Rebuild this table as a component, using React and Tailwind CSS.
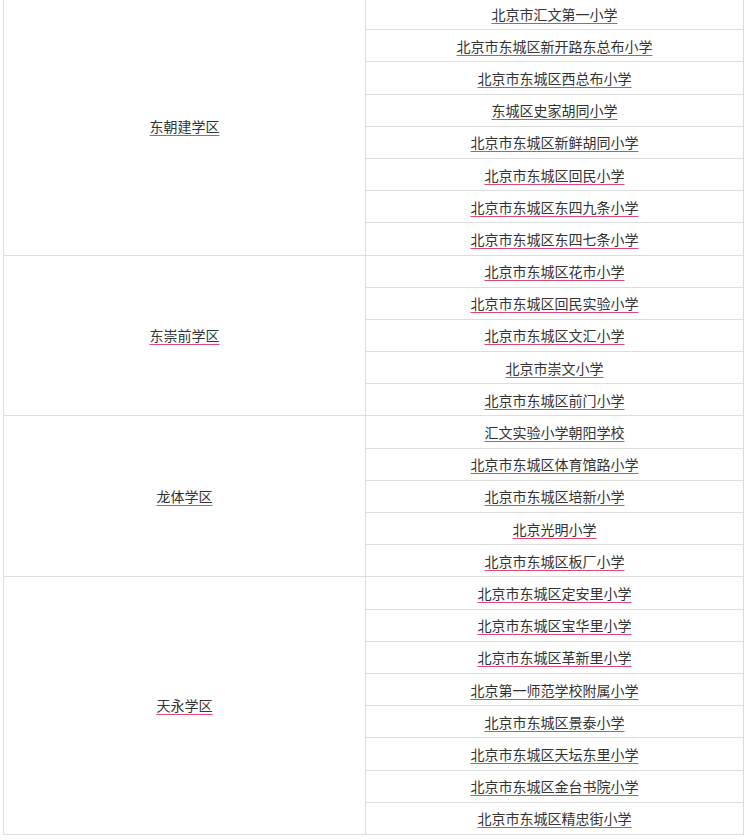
const groups = [
  { name: "东朝建学区", schools: ["北京市汇文第一小学", "北京市东城区新开路东总布小学", "北京市东城区西总布小学", "东城区史家胡同小学", "北京市东城区新鲜胡同小学", "北京市东城区回民小学", "北京市东城区东四九条小学", "北京市东城区东四七条小学"] },
  { name: "东崇前学区", schools: ["北京市东城区花市小学", "北京市东城区回民实验小学", "北京市东城区文汇小学", "北京市崇文小学", "北京市东城区前门小学"] },
  { name: "龙体学区", schools: ["汇文实验小学朝阳学校", "北京市东城区体育馆路小学", "北京市东城区培新小学", "北京光明小学", "北京市东城区板厂小学"] },
  { name: "天永学区", schools: ["北京市东城区定安里小学", "北京市东城区宝华里小学", "北京市东城区革新里小学", "北京第一师范学校附属小学", "北京市东城区景泰小学", "北京市东城区天坛东里小学", "北京市东城区金台书院小学", "北京市东城区精忠街小学"] },
];

function Txt({ children }) {
  return (
    <span className="underline decoration-[#e0457b] decoration-1 underline-offset-[3px]">{children}</span>
  );
}

export default function App() {
  return (
    <div className="bg-white w-[747px] h-[840px] overflow-hidden" style={{ fontFamily: '"Noto Sans CJK SC", "Noto Sans", sans-serif' }}>
      <table className="mt-[-3px] ml-[3px] w-[740px] border-collapse text-[14px] text-[#333] table-fixed">
        <colgroup>
          <col className="w-[362px]" />
          <col className="w-[378px]" />
        </colgroup>
        <tbody>
          {groups.flatMap((g) =>
            g.schools.map((s, i) => (
              <tr key={g.name + s} className="h-[32.2px]">
                {i === 0 && (
                  <td rowSpan={g.schools.length} className="border border-[#dddddd] text-center align-middle p-0">
                    <Txt>{g.name}</Txt>
                  </td>
                )}
                <td className="border border-[#dddddd] text-center align-middle p-0 leading-[20px]">
                  <Txt>{s}</Txt>
                </td>
              </tr>
            ))
          )}
        </tbody>
      </table>
    </div>
  );
}
